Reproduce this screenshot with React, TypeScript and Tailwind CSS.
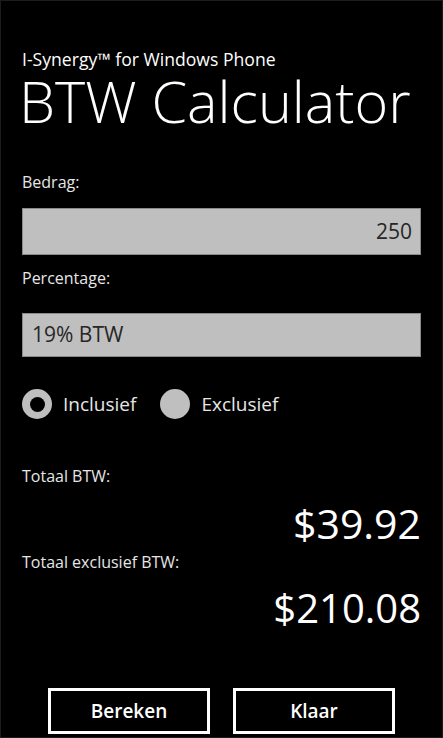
import React, { useState } from 'react';

const font = { fontFamily: '"Open Sans", "Noto Sans", sans-serif' };

export default function App() {
  const [mode, setMode] = useState<'incl' | 'excl'>('incl');

  return (
    <div
      className="w-[443px] h-[738px] bg-black text-white border border-[#1c1c1c] flex flex-col"
      style={font}
    >
      {/* Header */}
      <div className="pl-[21px] pt-[48px]">
        <div className="text-[17.6px] leading-[20px] text-white">I-Synergy™ for Windows Phone</div>
        <div className="mt-[1px] text-[57.5px] leading-[62px] font-light -ml-[3px]">BTW Calculator</div>
      </div>

      {/* Form */}
      <div className="px-[21px] mt-[40px] flex flex-col">
        <div className="text-[16px] leading-[20px] text-[#e6e6e6]">Bedrag:</div>
        <div className="mt-[16px] h-[47px] bg-[#bfbfbf] border border-[#8a8a8a] flex items-center justify-end pr-[8px] text-[21px] text-[#262626]">
          250
        </div>

        <div className="mt-[13px] text-[16px] leading-[20px] text-[#e6e6e6]">Percentage:</div>
        <div className="mt-[25px] h-[44px] bg-[#bfbfbf] border border-[#8a8a8a] flex items-center pl-[9px] text-[21px] text-[#262626]">
          19% BTW
        </div>

        <div className="mt-[32px] flex items-center">
          <button onClick={() => setMode('incl')} className="flex items-center">
            <span className="w-[30px] h-[30px] rounded-full bg-[#bfbfbf] flex items-center justify-center">
              {mode === 'incl' && <span className="w-[15px] h-[15px] rounded-full bg-black" />}
            </span>
            <span className="ml-[11px] text-[19px] text-[#e6e6e6]">Inclusief</span>
          </button>
          <button onClick={() => setMode('excl')} className="flex items-center ml-[24px]">
            <span className="w-[30px] h-[30px] rounded-full bg-[#bfbfbf] flex items-center justify-center">
              {mode === 'excl' && <span className="w-[15px] h-[15px] rounded-full bg-black" />}
            </span>
            <span className="ml-[11px] text-[19px] text-[#e6e6e6]">Exclusief</span>
          </button>
        </div>

        {/* Results */}
        <div className="mt-[47px] text-[16px] leading-[20px] text-[#e6e6e6]">Totaal BTW:</div>
        <div className="mt-[12px] text-right text-[41px] leading-[50px]">$39.92</div>
        <div className="mt-[4px] text-[16px] leading-[20px] text-[#e6e6e6]">Totaal exclusief BTW:</div>
        <div className="mt-[11px] text-right text-[40px] leading-[50px]">$210.08</div>
      </div>

      {/* Buttons */}
      <div className="mt-auto mb-[3px] flex justify-center gap-[23px]">
        <button className="w-[162px] h-[46px] border-[3px] border-white text-[19px] font-semibold">Bereken</button>
        <button className="w-[162px] h-[46px] border-[3px] border-white text-[19px] font-semibold">Klaar</button>
      </div>
    </div>
  );
}
